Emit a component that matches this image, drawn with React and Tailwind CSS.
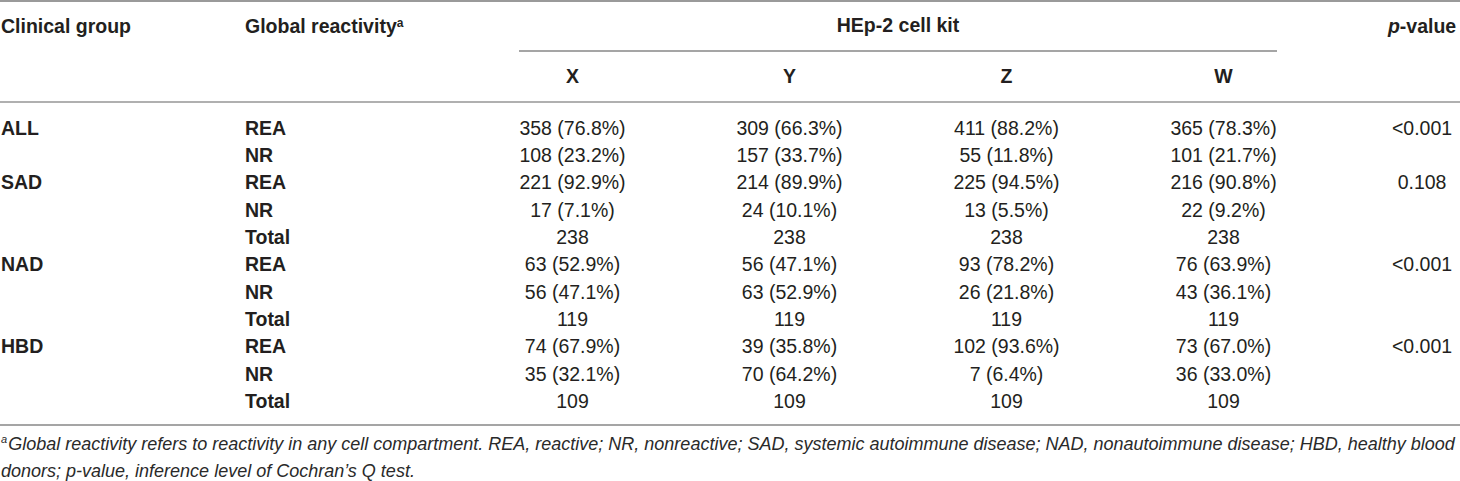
export default function App() {
  const groups = [
    {
      name: "ALL",
      p: "<0.001",
      rows: [
        ["REA", "358 (76.8%)", "309 (66.3%)", "411 (88.2%)", "365 (78.3%)"],
        ["NR", "108 (23.2%)", "157 (33.7%)", "55 (11.8%)", "101 (21.7%)"],
      ],
    },
    {
      name: "SAD",
      p: "0.108",
      rows: [
        ["REA", "221 (92.9%)", "214 (89.9%)", "225 (94.5%)", "216 (90.8%)"],
        ["NR", "17 (7.1%)", "24 (10.1%)", "13 (5.5%)", "22 (9.2%)"],
        ["Total", "238", "238", "238", "238"],
      ],
    },
    {
      name: "NAD",
      p: "<0.001",
      rows: [
        ["REA", "63 (52.9%)", "56 (47.1%)", "93 (78.2%)", "76 (63.9%)"],
        ["NR", "56 (47.1%)", "63 (52.9%)", "26 (21.8%)", "43 (36.1%)"],
        ["Total", "119", "119", "119", "119"],
      ],
    },
    {
      name: "HBD",
      p: "<0.001",
      rows: [
        ["REA", "74 (67.9%)", "39 (35.8%)", "102 (93.6%)", "73 (67.0%)"],
        ["NR", "35 (32.1%)", "70 (64.2%)", "7 (6.4%)", "36 (33.0%)"],
        ["Total", "109", "109", "109", "109"],
      ],
    },
  ];

  const flat = [];
  groups.forEach((g) =>
    g.rows.forEach((r, i) =>
      flat.push({ group: i === 0 ? g.name : "", p: i === 0 ? g.p : "", r })
    )
  );

  return (
    <div
      className="w-[1460px] bg-white text-[#231f20] text-[19.5px]"
      style={{ fontFamily: '"Liberation Sans", Arial, sans-serif' }}
    >
      <table className="w-[1460px] border-collapse table-fixed">
        <colgroup>
          <col className="w-[245px]" />
          <col className="w-[219px]" />
          <col className="w-[217px]" />
          <col className="w-[217px]" />
          <col className="w-[217px]" />
          <col className="w-[217px]" />
          <col className="w-[128px]" />
        </colgroup>
        <thead>
          <tr className="h-[50px] border-t-[2px] border-[#9a9a9a] align-middle leading-none">
            <th className="text-left font-bold p-0 pl-[1px]">Clinical group</th>
            <th className="text-left font-bold p-0 whitespace-nowrap">
              Global reactivity<sup className="text-[12px] font-bold">a</sup>
            </th>
            <th colSpan={4} className="p-0 font-bold h-[50px]">
              <div className="flex flex-col h-[50px]">
                <div className="flex-1 flex items-center justify-center">HEp-2 cell kit</div>
                <div className="mx-[55px] border-b-[2px] border-[#a5a5a5]" />
              </div>
            </th>
            <th className="p-0 pl-[52px] font-bold text-center whitespace-nowrap">
              <span className="italic">p</span>-value
            </th>
          </tr>
          <tr className="h-[50px] border-b-[2px] border-[#b0b0b0] leading-none">
            <th className="p-0" />
            <th className="p-0" />
            <th className="p-0 font-bold text-center">X</th>
            <th className="p-0 font-bold text-center">Y</th>
            <th className="p-0 font-bold text-center">Z</th>
            <th className="p-0 font-bold text-center">W</th>
            <th className="p-0" />
          </tr>
        </thead>
        <tbody>
          <tr className="h-[13px]">
            <td colSpan={7} className="p-0" />
          </tr>
          {flat.map((row, i) => (
            <tr key={i} className="h-[27.3px] leading-none">
              <td className="p-0 pl-[1px] font-bold">{row.group}</td>
              <td className="p-0 font-bold">{row.r[0]}</td>
              <td className="p-0 text-center whitespace-nowrap">{row.r[1]}</td>
              <td className="p-0 text-center whitespace-nowrap">{row.r[2]}</td>
              <td className="p-0 text-center whitespace-nowrap">{row.r[3]}</td>
              <td className="p-0 text-center whitespace-nowrap">{row.r[4]}</td>
              <td className="p-0 pl-[52px] text-center">{row.p}</td>
            </tr>
          ))}
          <tr className="h-[10px] border-b-[2px] border-[#a5a5a5]">
            <td colSpan={7} className="p-0" />
          </tr>
        </tbody>
      </table>
      <div className="pt-[5px] pl-[1px] italic text-[18px] leading-[27px] text-[#2a2a2a]">
        <span className="align-super text-[11px] leading-none mr-[1px]">a</span>Global reactivity refers to reactivity in any cell
        compartment. REA, reactive; NR, nonreactive; SAD, systemic autoimmune disease; NAD,
        nonautoimmune disease; HBD, healthy blood donors; p-value, inference level of Cochran’s Q
        test.
      </div>
    </div>
  );
}
